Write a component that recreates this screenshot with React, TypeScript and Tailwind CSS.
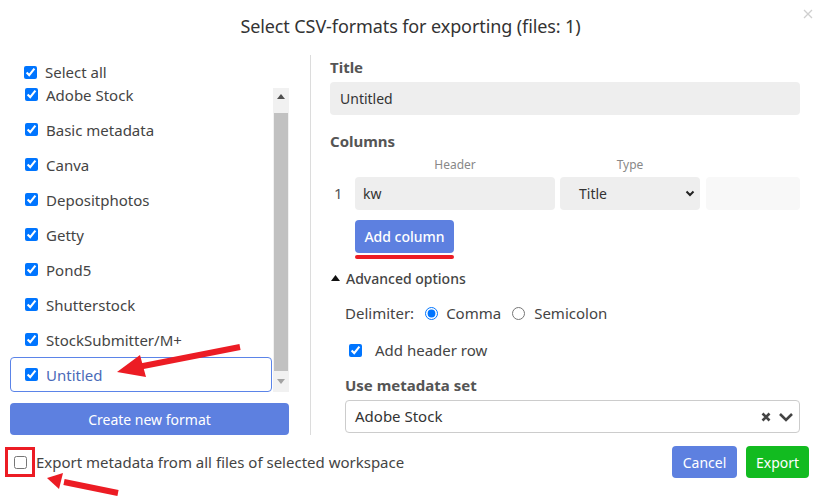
import React from "react";

const items = [
  "Adobe Stock",
  "Basic metadata",
  "Canva",
  "Depositphotos",
  "Getty",
  "Pond5",
  "Shutterstock",
  "StockSubmitter/M+",
  "Untitled",
];

export default function App() {
  return (
    <div
      className="relative w-[821px] h-[504px] bg-white text-[#444] overflow-hidden"
      style={{ fontFamily: '"Noto Sans", "Open Sans", sans-serif' }}
    >
      {/* Header */}
      <div className="relative h-[50px] flex items-center justify-center">
        <div className="text-[18px] text-[#333] leading-none pt-[1px] tracking-[-0.1px]">
          Select CSV-formats for exporting (files: 1)
        </div>
        <svg
          className="absolute right-[8px] top-[9px]"
          width="10"
          height="10"
          viewBox="0 0 10 10"
        >
          <path d="M1 1L9 9M9 1L1 9" stroke="#cfcfcf" strokeWidth="1.3" />
        </svg>
      </div>

      {/* Main */}
      <div className="flex h-[386px]">
        {/* Left column */}
        <div className="w-[289px] pl-[10px] flex flex-col">
          <label className="flex items-center h-[16px] mt-[14px] pl-[14px] text-[15px]">
            <input type="checkbox" defaultChecked className="w-[13px] h-[13px]" />
            <span className="ml-[8px] leading-none">Select all</span>
          </label>
          <div className="flex mt-[5px] h-[307px]">
            <div className="flex-1 overflow-hidden">
              <div className="mt-[-8px] flex flex-col">
                {items.map((name) => {
                  const active = name === "Untitled";
                  return (
                    <div
                      key={name}
                      className={
                        active
                          ? "h-[35px] flex items-center pl-[14px] border border-[#5b84e8] rounded-[4px] text-[#4a6ab8]"
                          : "h-[35px] flex items-center pl-[14px] border border-transparent"
                      }
                    >
                      <input type="checkbox" defaultChecked className="w-[13px] h-[13px]" />
                      <span className="ml-[8px] text-[15px] leading-[18px]">{name}</span>
                    </div>
                  );
                })}
              </div>
            </div>
            {/* Scrollbar */}
            <div className="w-[16px] ml-[1px] mt-[3px] bg-[#f1f1f1] flex flex-col items-center">
              <div className="h-[17px] flex items-center justify-center">
                <svg width="8" height="5" viewBox="0 0 8 5">
                  <path d="M0 5L4 0L8 5Z" fill="#505050" />
                </svg>
              </div>
              <div className="w-[14px] h-[258px] mt-[8px] bg-[#c1c1c1]" />
              <div className="flex-1 flex items-center justify-center">
                <svg width="8" height="5" viewBox="0 0 8 5">
                  <path d="M0 0L4 5L8 0Z" fill="#a3a3a3" />
                </svg>
              </div>
            </div>
          </div>
          <button className="mt-[11px] h-[32px] w-full rounded-[4px] bg-[#5d80e0] text-white text-[14px]">
            Create new format
          </button>
        </div>

        {/* Separator */}
        <div className="w-px bg-[#dcdcdc] ml-[21px] mt-[5px] h-[380px]" />

        {/* Right column */}
        <div className="flex-1 pl-[19px] pr-[21px] flex flex-col">
          <div className="mt-[7px] h-[20px] flex items-center text-[15px] font-bold text-[#555]">
            Title
          </div>
          <div className="mt-[5px] h-[33px] rounded-[4px] bg-[#eeeeee] flex items-center pl-[10px] text-[14px] text-[#333]">
            Untitled
          </div>
          <div className="mt-[16px] h-[20px] flex items-center text-[15px] font-bold text-[#555]">
            Columns
          </div>
          <div className="mt-[6px] h-[16px] flex items-center text-[12px] text-[#888]">
            <div className="w-[25px]" />
            <div className="w-[200px] text-center">Header</div>
            <div className="w-[140px] ml-[5px] text-center">Type</div>
          </div>
          <div className="mt-[4px] h-[33px] flex items-center text-[14px]">
            <div className="w-[25px] pl-[4px] text-[15px] text-[#555]">1</div>
            <div className="w-[200px] h-full rounded-[4px] bg-[#eeeeee] flex items-center pl-[8px] text-[#333]">
              kw
            </div>
            <div className="w-[140px] ml-[5px] h-full rounded-[4px] bg-[#eeeeee] flex items-center pl-[19px] pr-[5px] text-[#333]">
              <span className="flex-1">Title</span>
              <svg width="10" height="7" viewBox="0 0 10 7">
                <path d="M1.5 1.5L5 5L8.5 1.5" stroke="#222" strokeWidth="2" fill="none" />
              </svg>
            </div>
            <div className="flex-1 ml-[6px] h-full rounded-[4px] bg-[#f8f8f8]" />
          </div>
          <div className="pl-[25px] flex flex-col">
            <button className="mt-[10px] w-[99px] h-[33px] rounded-[4px] bg-[#5d80e0] text-white text-[14px] font-medium">
              Add column
            </button>
            <div className="mt-[2px] w-[99px] h-[4px] rounded-full bg-[#ec1c24]" />
          </div>
          <div className="mt-[9px] h-[20px] flex items-center text-[14px] font-medium text-[#444] pl-[1px]">
            <svg width="9" height="6" viewBox="0 0 9 6" className="mr-[6px]">
              <path d="M0 6L4.5 0L9 6Z" fill="#111" />
            </svg>
            Advanced options
          </div>
          <div className="mt-[15px] h-[20px] flex items-center pl-[15px] text-[15px]">
            <span>Delimiter:</span>
            <input type="radio" name="delim" defaultChecked className="ml-[11px] w-[13px] h-[13px]" />
            <span className="ml-[8px]">Comma</span>
            <input type="radio" name="delim" className="ml-[11px] w-[13px] h-[13px]" />
            <span className="ml-[9px]">Semicolon</span>
          </div>
          <div className="mt-[17px] h-[20px] flex items-center pl-[19px] text-[15px]">
            <input type="checkbox" defaultChecked className="w-[13px] h-[13px]" />
            <span className="ml-[13px]">Add header row</span>
          </div>
          <div className="mt-[15px] h-[20px] flex items-center pl-[15px] text-[15px] font-bold text-[#555]">
            Use metadata set
          </div>
          <div className="mt-[5px] ml-[15px] h-[33px] border border-[#cccccc] rounded-[4px] flex items-center pl-[9px] pr-[5px] text-[15px] text-[#333]">
            <span className="flex-1">Adobe Stock</span>
            <svg width="10" height="10" viewBox="0 0 10 10" className="mr-[7px]">
              <path d="M1.5 1.5L8.5 8.5M8.5 1.5L1.5 8.5" stroke="#444" strokeWidth="2.6" />
            </svg>
            <svg width="16" height="10" viewBox="0 0 16 10">
              <path d="M2 2L8 8L14 2" stroke="#444" strokeWidth="2.6" fill="none" />
            </svg>
          </div>
        </div>
      </div>

      {/* Footer */}
      <div className="mt-[10px] h-[32px] flex items-center">
        <div className="ml-[5px] w-[30px] h-[30px] border-[3px] border-[#ec1c24] flex items-center justify-center">
          <input type="checkbox" className="w-[13px] h-[13px]" />
        </div>
        <span className="ml-[1px] text-[15px]">
          Export metadata from all files of selected workspace
        </span>
        <div className="flex-1" />
        <button className="w-[65px] h-[32px] rounded-[4px] bg-[#5d80e0] text-white text-[14px]">
          Cancel
        </button>
        <button className="ml-[9px] mr-[12px] w-[63px] h-[32px] rounded-[4px] bg-[#12bb20] text-white text-[14px]">
          Export
        </button>
      </div>

      {/* Annotation arrows */}
      <svg
        className="absolute left-0 top-0 pointer-events-none"
        width="821"
        height="504"
        viewBox="0 0 821 504"
      >
        <line x1="240" y1="347" x2="138" y2="367" stroke="#ec1c24" strokeWidth="6" />
        <path d="M117 372L140 355L146 377Z" fill="#ec1c24" />
        <line x1="118" y1="493" x2="64" y2="482" stroke="#ec1c24" strokeWidth="6" />
        <path d="M47 478L63 473L59 489Z" fill="#ec1c24" />
      </svg>
    </div>
  );
}
